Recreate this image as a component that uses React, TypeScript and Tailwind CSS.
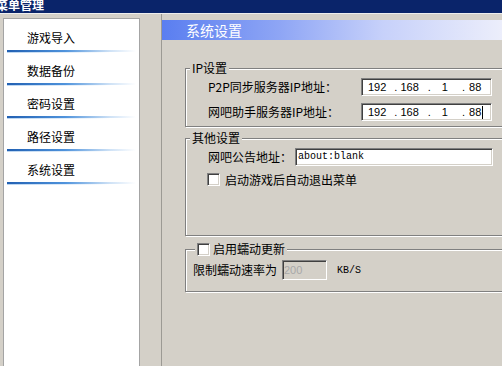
import React from "react";

// classic win98 sunken field + etched group box styles
const sunken =
  "border border-t-[#808080] border-l-[#808080] border-r-white border-b-white shadow-[inset_1px_1px_0_#404040,inset_-1px_-1px_0_#d4d0c8]";
const etched = "border border-[#808080] shadow-[1px_1px_0_#fff,inset_1px_1px_0_#fff]";

const navItems = ["游戏导入", "数据备份", "密码设置", "路径设置", "系统设置"];

function CheckBox() {
  return <div className={clsxLike("w-[13px] h-[13px] shrink-0 bg-white", sunken)} />;
}

function clsxLike(...c: string[]) {
  return c.join(" ");
}

function IpField({ caret }: { caret?: boolean }) {
  return (
    <div
      className={clsxLike(
        "w-[131px] h-[18px] bg-white flex items-center font-['Liberation_Sans',sans-serif] text-[11px] leading-[12px]",
        sunken
      )}
    >
      <span className="ml-[6px]">192</span>
      <span className="ml-[8px]">.</span>
      <span className="ml-[3px]">168</span>
      <span className="ml-[9px]">.</span>
      <span className="ml-[11px]">1</span>
      <span className="ml-[14px]">.</span>
      <span className="ml-[4px]">88</span>
      {caret && <span className="ml-[1px] w-px h-[13px] bg-black" />}
    </div>
  );
}

export default function App() {
  return (
    <div className="w-[502px] h-[366px] overflow-hidden bg-[#d4d0c8] flex flex-col font-['Noto_Sans_CJK_SC',sans-serif] text-[12px] text-black">
      {/* title bar, cut off at top-left */}
      <div className="h-[13px] shrink-0 bg-[#0a246a] overflow-hidden">
        <div className="-ml-[4px] -mt-[2px] text-[12px] leading-[14px] font-bold text-white whitespace-nowrap">
          菜单管理
        </div>
      </div>
      <div className="h-px shrink-0 bg-[#eeeeee]" />

      <div className="flex flex-1 min-h-0">
        {/* left nav */}
        <div className="pl-[3px] pt-[4px] shrink-0">
          <div className="w-[137px] h-[360px] bg-white border border-[#a4a4a4] pt-px">
            {navItems.map((t) => (
              <div key={t} className="h-[33px] flex flex-col">
                <div className="pt-[11px] pl-[23px] leading-[14px] text-[12px]">{t}</div>
                <div className="mt-auto mx-[3px] h-[2px] bg-[linear-gradient(to_right,#2160b2,#4f93dc_45%,#cfe2f6_80%,#ffffff)]" />
                <div className="mx-[3px] h-px bg-[linear-gradient(to_right,#b9d4f0,#ffffff_80%)]" />
              </div>
            ))}
          </div>
        </div>

        {/* right settings panel */}
        <div className="ml-[21px] flex-1 min-w-0 border-l border-[#9c9a94]">
          <div className="mt-[6px] h-[20px] flex items-center pl-[24px] text-white text-[14px] leading-[16px] bg-[linear-gradient(to_right,#5a7ef0,#8fa6f5_35%,#c7d1fa_65%,#eceefb)]">
            系统设置
          </div>

          {/* IP设置 */}
          <div className={clsxLike("relative mt-[28px] ml-[23px] w-[340px] h-[59px] pt-[9px] flex flex-col gap-[7px]", etched)}>
            <span className="absolute left-[4px] -top-[8px] px-[2px] bg-[#d4d0c8] leading-[14px]">IP设置</span>
            <div className="flex items-center h-[18px] pl-[22px]">
              <span className="w-[153px] whitespace-nowrap">P2P同步服务器IP地址：</span>
              <IpField />
            </div>
            <div className="flex items-center h-[18px] pl-[22px]">
              <span className="w-[153px] whitespace-nowrap">网吧助手服务器IP地址：</span>
              <IpField caret />
            </div>
          </div>

          {/* 其他设置 */}
          <div className={clsxLike("relative mt-[11px] ml-[23px] w-[340px] h-[98px] pt-[9px] flex flex-col", etched)}>
            <span className="absolute left-[4px] -top-[8px] px-[2px] bg-[#d4d0c8] leading-[14px]">其他设置</span>
            <div className="flex items-center h-[18px] pl-[22px]">
              <span className="w-[87px] whitespace-nowrap">网吧公告地址：</span>
              <div
                className={clsxLike(
                  "w-[198px] h-[18px] bg-white flex items-center pl-[2px] font-['Liberation_Mono',monospace] text-[10px] leading-[12px]",
                  sunken
                )}
              >
                about:blank
              </div>
            </div>
            <div className="flex items-center mt-[7px] h-[13px] pl-[21px]">
              <CheckBox />
              <span className="ml-[5px] leading-[14px]">启动游戏后自动退出菜单</span>
            </div>
          </div>

          {/* 蠕动更新 */}
          <div className={clsxLike("relative mt-[13px] ml-[23px] w-[340px] h-[43px] pt-[10px]", etched)}>
            <div className="absolute left-[9px] -top-[8px] px-[2px] bg-[#d4d0c8] flex items-center h-[14px]">
              <CheckBox />
              <span className="ml-[3px] leading-[14px]">启用蠕动更新</span>
            </div>
            <div className="flex items-center h-[20px] pl-[7px]">
              <span className="w-[89px] whitespace-nowrap">限制蠕动速率为</span>
              <div
                className={clsxLike(
                  "w-[45px] h-[20px] bg-[#d4d0c8] flex items-center pl-px font-['Liberation_Sans',sans-serif] text-[11px] text-[#a8a8a8]",
                  sunken
                )}
              >
                200
              </div>
              <span className="ml-[10px] font-['Liberation_Mono',monospace] text-[10px]">KB/S</span>
            </div>
          </div>
        </div>
      </div>
    </div>
  );
}
